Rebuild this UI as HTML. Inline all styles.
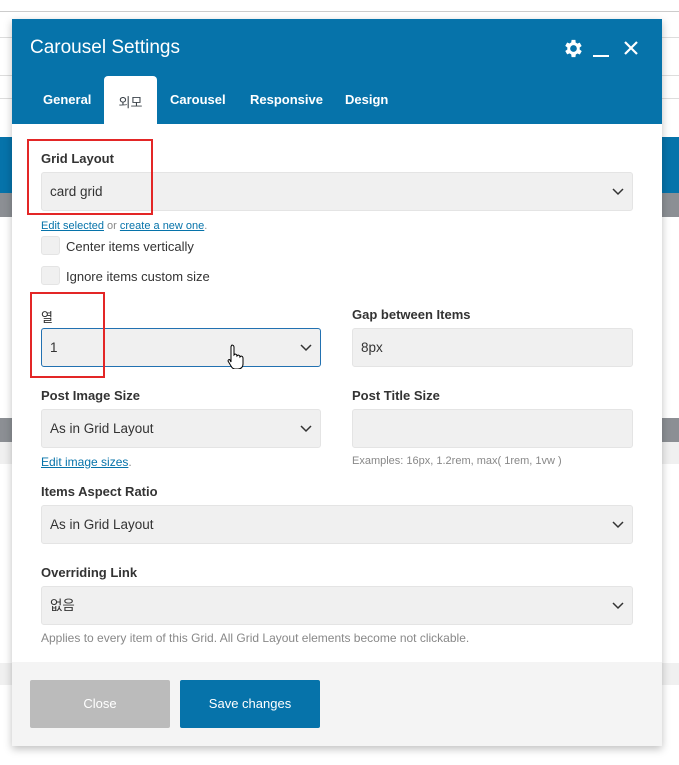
<!DOCTYPE html>
<html><head><meta charset="utf-8"><style>
*{box-sizing:border-box;margin:0;padding:0}
body{width:679px;height:765px;background:#fff;position:relative;overflow:hidden;font-family:"Liberation Sans","Noto Sans CJK KR",sans-serif;color:#3c434a}
.bg{position:absolute;left:0;width:679px}
.modal{position:absolute;left:12px;top:19px;width:650px;height:727px;background:#fff;box-shadow:0 3px 8px rgba(0,0,0,.25)}
.hdr{height:105px;background:#0673aa;position:relative}
.title{position:absolute;left:18px;top:18px;color:#fff;font-size:19px}
.tab{position:absolute;top:73px;color:#fff;font-size:13px;font-weight:bold}
.tab.act{top:57px;left:92px;width:53px;height:48px;background:#fff;border-radius:4px 4px 0 0;color:#3c434a;font-weight:normal;text-align:center;padding-top:16px;font-size:13px}
.lbl{position:absolute;font-size:13px;font-weight:bold;color:#333}
.sel{position:absolute;background:#f0f0f0;border:1px solid #e4e4e4;border-radius:3px;font-size:13.5px;color:#333;padding-left:8px;line-height:38px}
.sel svg{position:absolute;right:8px;top:15px}
.small{position:absolute;font-size:11px;color:#888}
a{color:#0673aa;text-decoration:underline}
.cb{position:absolute;left:29px;width:19px;height:19px;background:#f0f0f0;border:1px solid #e4e4e4;border-radius:3px}
.cbl{position:absolute;left:54px;font-size:13px;color:#333}
.red{position:absolute;border:2px solid #e32626}
.foot{position:absolute;left:0;top:643px;width:650px;height:84px;background:#f4f4f4}
.btn{position:absolute;top:18px;width:140px;height:48px;border-radius:2px;color:#fff;font-size:13px;text-align:center;line-height:48px}
</style></head><body>
<div class="bg" style="top:11px;height:1px;background:#ccc"></div>
<div class="bg" style="top:37px;height:1px;background:#ddd"></div>
<div class="bg" style="top:75px;height:1px;background:#ddd"></div>
<div class="bg" style="top:98px;height:1px;background:#ddd"></div>
<div class="bg" style="top:137px;height:56px;background:#0673aa"></div>
<div class="bg" style="top:193px;height:24px;background:#8c8f94"></div>
<div class="bg" style="top:418px;height:24px;background:#8c8f94"></div>
<div class="bg" style="top:442px;height:22px;background:#f0f0f0"></div>
<div class="bg" style="top:663px;height:22px;background:#f0f0f0"></div>
<div class="modal">
 <div class="hdr">
  <div class="title">Carousel Settings</div>
  <svg style="position:absolute;left:550px;top:18px" width="23" height="23" viewBox="0 0 24 24"><path fill="#fff" d="M19.4 13a7.5 7.5 0 0 0 0-2l2.1-1.6-2-3.5-2.5 1a7 7 0 0 0-1.7-1L15 3h-4l-.4 2.8a7 7 0 0 0-1.7 1l-2.5-1-2 3.5L6.6 11a7.5 7.5 0 0 0 0 2l-2.2 1.6 2 3.5 2.5-1a7 7 0 0 0 1.7 1L11 21h4l.4-2.8a7 7 0 0 0 1.7-1l2.5 1 2-3.5zM13 15.5A3.5 3.5 0 1 1 13 8.5a3.5 3.5 0 0 1 0 7z" transform="translate(-1 0)"/></svg>
  <div style="position:absolute;left:581px;top:36px;width:16px;height:2px;background:#fff"></div>
  <svg style="position:absolute;left:611px;top:21px" width="16" height="16" viewBox="0 0 16 16"><path d="M2 2L14 14M14 2L2 14" stroke="#fff" stroke-width="2.2"/></svg>
  <div class="tab" style="left:31px">General</div>
  <div class="tab act">외모</div>
  <div class="tab" style="left:158px">Carousel</div>
  <div class="tab" style="left:238px">Responsive</div>
  <div class="tab" style="left:333px">Design</div>
 </div>
 <div class="lbl" style="left:29px;top:132px">Grid Layout</div>
 <div class="sel" style="left:29px;top:153px;width:592px;height:39px">card grid<svg width="12" height="8"><path d="M1 1l5 5 5-5" stroke="#333" stroke-width="1.5" fill="none"/></svg></div>
 <div class="small" style="left:29px;top:201px"><a>Edit selected</a> or <a>create a new one</a>.</div>
 <div class="cb" style="top:217px"></div><div class="cbl" style="top:220px">Center items vertically</div>
 <div class="cb" style="top:247px"></div><div class="cbl" style="top:250px">Ignore items custom size</div>
 <div class="lbl" style="left:29px;top:288px;font-weight:normal">열</div>
 <div class="sel" style="left:29px;top:309px;width:280px;height:39px;border-color:#2271b1">1<svg width="12" height="8"><path d="M1 1l5 5 5-5" stroke="#333" stroke-width="1.5" fill="none"/></svg></div>
 <div class="lbl" style="left:340px;top:288px">Gap between Items</div>
 <div class="sel" style="left:340px;top:309px;width:281px;height:39px">8px</div>
 <div class="lbl" style="left:29px;top:369px">Post Image Size</div>
 <div class="sel" style="left:29px;top:390px;width:280px;height:39px">As in Grid Layout<svg width="12" height="8"><path d="M1 1l5 5 5-5" stroke="#333" stroke-width="1.5" fill="none"/></svg></div>
 <div class="small" style="left:29px;top:436px;font-size:12px"><a>Edit image sizes</a>.</div>
 <div class="lbl" style="left:340px;top:369px">Post Title Size</div>
 <div class="sel" style="left:340px;top:390px;width:281px;height:39px"></div>
 <div class="small" style="left:340px;top:436px">Examples: 16px, 1.2rem, max( 1rem, 1vw )</div>
 <div class="lbl" style="left:29px;top:465px">Items Aspect Ratio</div>
 <div class="sel" style="left:29px;top:486px;width:592px;height:39px">As in Grid Layout<svg width="12" height="8"><path d="M1 1l5 5 5-5" stroke="#333" stroke-width="1.5" fill="none"/></svg></div>
 <div class="lbl" style="left:29px;top:546px">Overriding Link</div>
 <div class="sel" style="left:29px;top:567px;width:592px;height:39px">없음<svg width="12" height="8"><path d="M1 1l5 5 5-5" stroke="#333" stroke-width="1.5" fill="none"/></svg></div>
 <div class="small" style="left:29px;top:612px;font-size:12px">Applies to every item of this Grid. All Grid Layout elements become not clickable.</div>
 <div class="foot">
  <div class="btn" style="left:18px;background:#bbb">Close</div>
  <div class="btn" style="left:168px;background:#0673aa">Save changes</div>
 </div>
</div>
<div class="red" style="left:27px;top:139px;width:126px;height:76px"></div>
<div class="red" style="left:30px;top:292px;width:75px;height:86px"></div>
<svg style="position:absolute;left:226px;top:343px" width="20" height="26" viewBox="0 0 20 26"><path d="M6 2c1 0 2 1 2 2v8l1-1c1 0 2 1 2 2l1-1c1 0 2 1 2 2l1-1c1 0 2 1 2 2v6c0 3-2 5-5 5h-3c-2 0-3-1-4-3l-3-5c0-1 1-2 2-1l1 2V4c0-1 1-2 1-2z" fill="#fff" stroke="#000" stroke-width="1"/></svg>
</body></html>
